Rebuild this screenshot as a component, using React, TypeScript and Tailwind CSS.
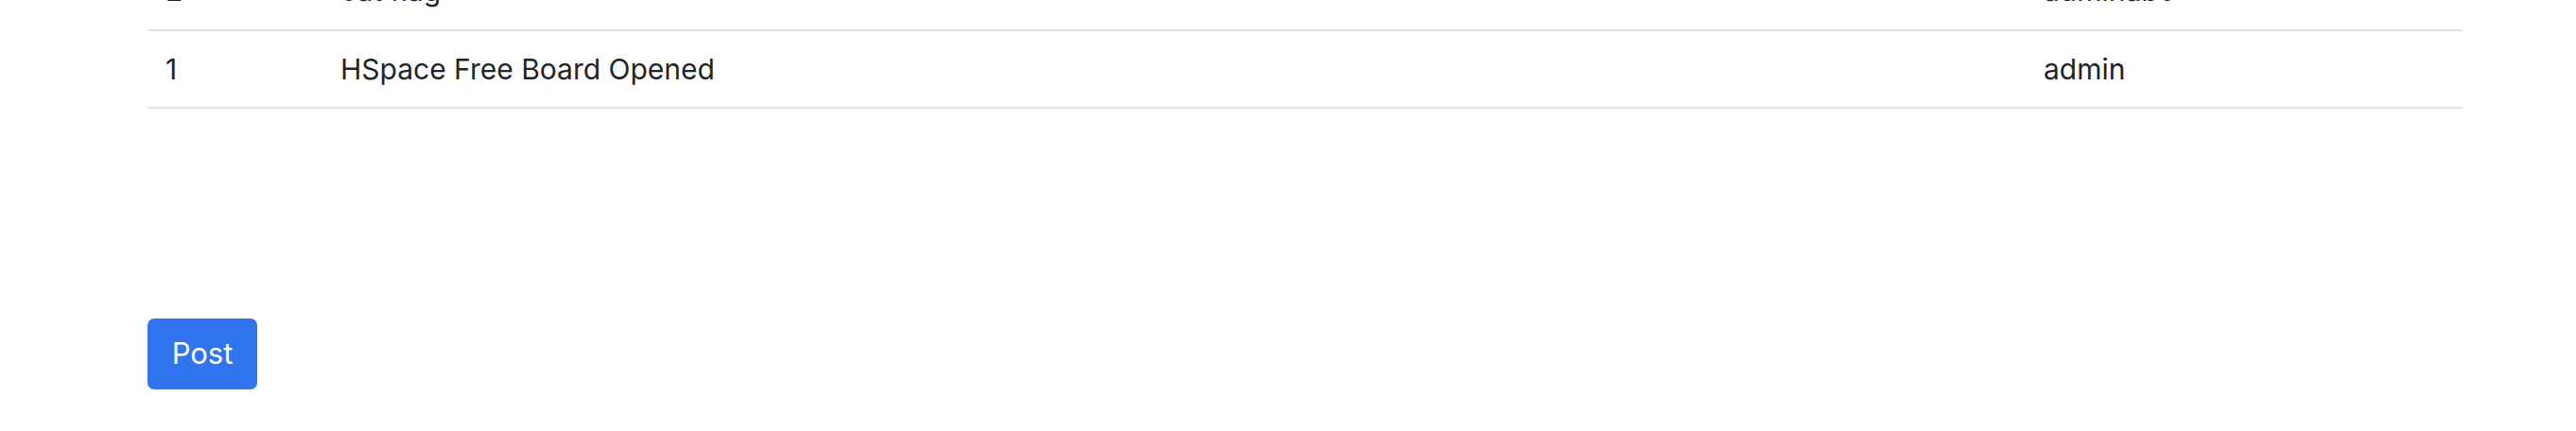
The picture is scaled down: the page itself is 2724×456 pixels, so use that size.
const rows = [
  { id: 2, title: "cat flag", author: "adminabc" },
  { id: 1, title: "HSpace Free Board Opened", author: "admin" },
];

export default function App() {
  return (
    <div className="min-h-[456px] bg-white text-[#212529]" style={{ fontFamily: "Inter, 'Liberation Sans', sans-serif" }}>
      <div className="px-[156px] pr-[120px]">
        <table className="w-full -mt-[50px] border-collapse text-[30px] leading-[40px]">
          <tbody>
            {rows.map((r) => (
              <tr key={r.id} className="h-[82px] border-b-2 border-[#dee2e6]">
                <td className="w-[184px] pl-[19px] pt-[20px] pb-[20px] align-top">{r.id}</td>
                <td className="pl-[20px] pt-[20px] pb-[20px] align-top">{r.title}</td>
                <td className="w-[463px] pl-[20px] pt-[20px] pb-[20px] align-top">{r.author}</td>
              </tr>
            ))}
          </tbody>
        </table>
        <button className="mt-[222px] h-[75px] w-[116px] rounded-[7px] bg-[#3174f0] text-[31px] text-white">
          Post
        </button>
      </div>
    </div>
  );
}
